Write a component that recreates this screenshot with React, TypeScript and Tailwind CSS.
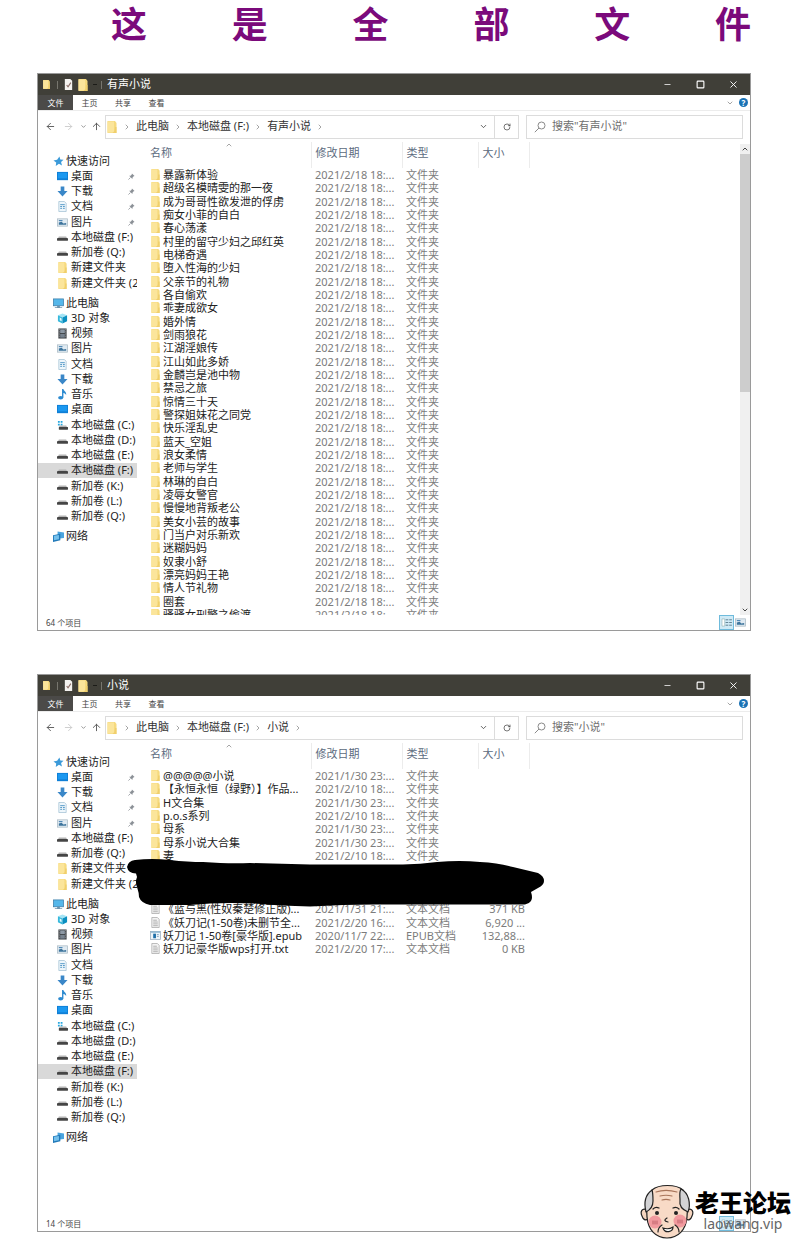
import type { ReactNode } from "react";
import { ArrowLeft, ArrowRight, ArrowUp, ChevronDown, ChevronRight, ChevronUp, Minus, RotateCw, Square, X } from "lucide-react";

type IconName = "star" | "desktop" | "download" | "doc" | "picture" | "drive" | "system" | "folder" | "pc" | "cube" | "video" | "music" | "network" | "text" | "epub";

type NavItem = { icon: IconName; label: string; pinned?: boolean; active?: boolean };

type FileRow = { icon: IconName; name: string; date: string; type: string; size?: string };

type ExplorerProps = {
  title: string;
  rows: (FileRow | null)[];
  status: string;
  scrollable?: boolean;
  children?: ReactNode;
};

const quickAccess: NavItem[] = [
  { icon: "desktop", label: "桌面", pinned: true },
  { icon: "download", label: "下载", pinned: true },
  { icon: "doc", label: "文档", pinned: true },
  { icon: "picture", label: "图片", pinned: true },
  { icon: "drive", label: "本地磁盘 (F:)" },
  { icon: "drive", label: "新加卷 (Q:)" },
  { icon: "folder", label: "新建文件夹" },
  { icon: "folder", label: "新建文件夹 (2)" },
];

const thisPc: NavItem[] = [
  { icon: "cube", label: "3D 对象" },
  { icon: "video", label: "视频" },
  { icon: "picture", label: "图片" },
  { icon: "doc", label: "文档" },
  { icon: "download", label: "下载" },
  { icon: "music", label: "音乐" },
  { icon: "desktop", label: "桌面" },
  { icon: "system", label: "本地磁盘 (C:)" },
  { icon: "drive", label: "本地磁盘 (D:)" },
  { icon: "drive", label: "本地磁盘 (E:)" },
  { icon: "drive", label: "本地磁盘 (F:)", active: true },
  { icon: "drive", label: "新加卷 (K:)" },
  { icon: "drive", label: "新加卷 (L:)" },
  { icon: "drive", label: "新加卷 (Q:)" },
];

const audioRows: FileRow[] = [
  "暴露新体验",
  "超级名模晴雯的那一夜",
  "成为哥哥性欲发泄的俘虏",
  "痴女小菲的自白",
  "春心荡漾",
  "村里的留守少妇之邱红英",
  "电梯奇遇",
  "堕入性海的少妇",
  "父亲节的礼物",
  "各自偷欢",
  "乖妻成欲女",
  "婚外情",
  "剑雨狼花",
  "江湖淫娘传",
  "江山如此多娇",
  "金麟岂是池中物",
  "禁忌之旅",
  "惊情三十天",
  "警探姐妹花之同党",
  "快乐淫乱史",
  "蓝天_空姐",
  "浪女柔情",
  "老师与学生",
  "林琳的自白",
  "凌辱女警官",
  "慢慢地背叛老公",
  "美女小芸的故事",
  "门当户对乐新欢",
  "迷糊妈妈",
  "奴隶小舒",
  "漂亮妈妈王艳",
  "情人节礼物",
  "圈套",
  "骚骚女刑警之偷渡",
].map((name) => ({ icon: "folder", name, date: "2021/2/18 18:...", type: "文件夹" }));

const novelRows: (FileRow | null)[] = [
  { icon: "folder", name: "@@@@@小说", date: "2021/1/30 23:...", type: "文件夹" },
  { icon: "folder", name: "【永恒永恒（绿野）】作品...", date: "2021/2/10 18:...", type: "文件夹" },
  { icon: "folder", name: "H文合集", date: "2021/1/30 23:...", type: "文件夹" },
  { icon: "folder", name: "p.o.s系列", date: "2021/2/10 18:...", type: "文件夹" },
  { icon: "folder", name: "母系", date: "2021/1/30 23:...", type: "文件夹" },
  { icon: "folder", name: "母系小说大合集", date: "2021/1/30 23:...", type: "文件夹" },
  { icon: "folder", name: "妻", date: "2021/2/10 18:...", type: "文件夹" },
  null,
  null,
  null,
  { icon: "text", name: "《蓝与黑(性奴秦楚修正版)...", date: "2021/1/31 21:...", type: "文本文档", size: "371 KB" },
  { icon: "text", name: "《妖刀记(1-50卷)未删节全...", date: "2021/2/20 16:...", type: "文本文档", size: "6,920 ..." },
  { icon: "epub", name: "妖刀记 1-50卷[豪华版].epub", date: "2020/11/7 22:...", type: "EPUB文档", size: "132,88..." },
  { icon: "text", name: "妖刀记豪华版wps打开.txt", date: "2021/2/20 17:...", type: "文本文档", size: "0 KB" },
];

const shapes: Record<IconName, ReactNode> = {
  star: <path d="M7 .5l1 3.200 3.500.3-2.700 2.500 1 3.800L6.500 8.500 3 11l.5-4L.5 5l4-.8z" fill="#3b9ad9" />,
  desktop: (
    <>
      <rect x="0" y="1" width="12" height="9" fill="#0f7fd6" />
      <rect x="1" y="2" width="10" height="6" fill="#1b98f0" />
    </>
  ),
  download: <path d="M4 .5h4v5h3.500L6 11.500.5 5.500H4z" fill="#3a87c8" />,
  doc: (
    <>
      <path d="M2 .5h6l2 2v9H2z" fill="#eef6fb" stroke="#9fbfd2" strokeWidth=".8" />
      <path d="M3.500 4h5M3.500 6h2M6.500 6h2M3.500 8h2M6.500 8h2" stroke="#4b93c4" />
    </>
  ),
  picture: (
    <>
      <rect x=".5" y="2" width="11" height="8" fill="#dfeaf2" stroke="#a9b9c4" strokeWidth=".8" />
      <path d="M2 3.500h4v1H2z" fill="#2d6fa5" />
      <path d="M2 8.500V6l3-.8L7 7l3-.5v2z" fill="#3d749c" />
    </>
  ),
  drive: (
    <>
      <path d="M2 5h8l1 2H1z" fill="#b4b4b4" />
      <rect x="0" y="6.500" width="12" height="3" rx=".5" fill="#454545" />
    </>
  ),
  system: (
    <>
      <path d="M1 1h2v2H1zM4 1h2v2H4zM1 4h2v2H1zM4 4h2v2H4z" fill="#26a7df" />
      <path d="M3 6h7l1 1.500H2z" fill="#b4b4b4" />
      <rect x="2" y="7.500" width="10" height="3" rx=".5" fill="#454545" />
    </>
  ),
  folder: (
    <>
      <path d="M1.500 0H9l1.500 2v10h-9z" fill="#f6da7e" />
      <path d="M1.500 .5H8v11H1.500z" fill="#fbe59b" />
      <path d="M9 6h1.500v6H6.500l2-2z" fill="#f0cf6c" />
    </>
  ),
  pc: (
    <>
      <rect x=".5" y="1" width="11" height="7.500" fill="#55b7ea" stroke="#3a7ca8" strokeWidth=".8" />
      <path d="M4.500 8.500h3v1.500H10v1H2v-1h2.500z" fill="#6d93ad" />
    </>
  ),
  cube: (
    <>
      <path d="M1 2.500L6 .5l5 2L6 5z" fill="#a5e4f5" />
      <path d="M1 2.500L6 5v6.500L1 9z" fill="#35b8dc" />
      <path d="M11 2.500L6 5v6.500L11 9z" fill="#0b8fc0" />
      <path d="M3 5l2 1v3L3 8z" fill="#e8f9fd" />
    </>
  ),
  video: (
    <>
      <rect x="1.500" y=".5" width="9" height="11" fill="#3f4449" />
      <rect x="3.500" y="1.500" width="5" height="4" fill="#8d99a5" />
      <rect x="3.500" y="6.500" width="5" height="4" fill="#76828e" />
      <path d="M2.500 1v10M9.500 1v10" stroke="#c8c8c8" strokeDasharray="1 1" strokeWidth=".7" />
    </>
  ),
  music: (
    <>
      <ellipse cx="4" cy="9.500" rx="2.800" ry="2" fill="#2c8ad0" />
      <path d="M5.500 0H7c.3 2.200 3.500 2.800 3 6.500C9.300 5 8 4.500 7 4.300V9.500H5.500z" fill="#2c8ad0" />
    </>
  ),
  network: (
    <>
      <path d="M5 .5l7 1v6l-7 1z" fill="#4aa4de" />
      <path d="M0 4.500l8-1.500v7l-8 2z" fill="#2179b8" />
      <path d="M1 5.300l5.500-1v4.700L1 10.200z" fill="#74c0ec" />
    </>
  ),
  text: (
    <>
      <path d="M2 .5h6l2 2v9H2z" fill="#f3f3f3" stroke="#a5a5a5" strokeWidth=".8" />
      <path d="M3.500 3.500h4M3.500 5.500h5M3.500 7.500h5M3.500 9.500h5" stroke="#9a9a9a" strokeWidth=".8" />
    </>
  ),
  epub: (
    <>
      <rect x=".5" y="1.500" width="11" height="9" fill="#eef5fa" stroke="#9ab" strokeWidth=".8" />
      <rect x="1" y="1.500" width="10" height="1.500" fill="#8bb4cf" />
      <rect x="3.500" y="4" width="3" height="5" fill="#1d6ea8" />
      <path d="M7.500 5h2M7.500 7h2" stroke="#68a" strokeWidth=".8" />
    </>
  ),
};

function Icon({ name, className = "size-[11px]" }: { name: IconName; className?: string }) {
  return (
    <svg viewBox="0 0 12 12" className={`shrink-0 ${className}`} aria-hidden="true">
      {shapes[name]}
    </svg>
  );
}

function Pin() {
  return (
    <svg viewBox="0 0 8 8" className="mr-[2px] ml-auto size-[7px] shrink-0" aria-hidden="true">
      <path d="M4.500.5l3 3-1 .3-1.300 1.400-.2 1.600L1.300 3.200 3 3l1.300-1.300z" fill="#8b9096" />
      <path d="M2.800 5.200L.5 7.500" stroke="#8b9096" strokeWidth=".9" />
    </svg>
  );
}

function NavHeading({ icon, label }: { icon: IconName; label: string }) {
  return (
    <a href="#" className="flex h-[15px] items-center gap-[2px] pl-[15px]">
      <Icon name={icon} />
      {label}
    </a>
  );
}

function NavList({ items }: { items: NavItem[] }) {
  return (
    <ul>
      {items.map((item) => (
        <li key={item.label} className="h-[15px] nth-[4n]:h-[16px]">
          <a
            href="#"
            className={`flex h-full items-center gap-[3px] overflow-hidden pl-[19px] whitespace-nowrap ${item.active ? "bg-[#d9d9d9]" : ""}`}
          >
            <Icon name={item.icon} />
            {item.label}
            {item.pinned && <Pin />}
          </a>
        </li>
      ))}
    </ul>
  );
}

function TitleBar({ title }: { title: string }) {
  return (
    <header className="flex h-[21px] items-center bg-[#403f38] pl-[4px] text-white">
      <Icon name="folder" className="size-[9px]" />
      <span className="ml-[6px] h-2 w-px bg-[#77766e]" />
      <svg viewBox="0 0 12 12" className="ml-[5px] size-[11px]" aria-hidden="true">
        <path d="M2 0h6l2 2v10H2z" fill="#f4f2ef" />
        <path d="M4 6.500l1.500 2L8.500 4" fill="none" stroke="#8a6d66" strokeWidth="1.200" />
      </svg>
      <Icon name="folder" className="ml-[3px] size-[12px]" />
      <span className="ml-[4px] h-px w-1 bg-[#1c1c18]" />
      <span className="ml-1 h-2 w-px bg-[#77766e]" />
      <h2 className="ml-[5px] flex-1 text-[11px]">{title}</h2>
      <button type="button" aria-label="最小化" className="flex w-[33px] justify-center">
        <Minus className="size-[9px]" />
      </button>
      <button type="button" aria-label="最大化" className="flex w-[33px] justify-center">
        <Square className="size-[9px]" strokeWidth={3} />
      </button>
      <button type="button" aria-label="关闭" className="flex w-[33px] justify-center">
        <X className="size-[11px]" />
      </button>
    </header>
  );
}

function RibbonTabs() {
  return (
    <div className="flex h-[16px] items-center border-b border-[#ececec] text-[8px] text-[#444]">
      <button type="button" className="h-full w-[35px] bg-[#4b4a48] text-white">
        文件
      </button>
      <button type="button" className="w-[33px]">主页</button>
      <button type="button" className="w-[34px]">共享</button>
      <button type="button" className="w-[33px]">查看</button>
      <ChevronDown className="ml-auto size-[8px] text-[#777]" />
      <button
        type="button"
        aria-label="帮助"
        className="mr-[2px] ml-[5px] flex size-[9px] items-center justify-center rounded-full bg-[#1a72b5] text-[8px] leading-none font-bold text-white"
      >
        ?
      </button>
    </div>
  );
}

function AddressBar({ title }: { title: string }) {
  return (
    <div className="flex h-[31px] items-center px-[7px] text-[#555]">
      <button type="button" aria-label="后退">
        <ArrowLeft className="size-[11px]" />
      </button>
      <button type="button" aria-label="前进" className="ml-[7px] text-[#ccc]">
        <ArrowRight className="size-[11px]" />
      </button>
      <button type="button" aria-label="最近" className="ml-[6px]">
        <ChevronDown className="size-[7px]" />
      </button>
      <button type="button" aria-label="向上" className="ml-1">
        <ArrowUp className="size-[11px]" />
      </button>
      <nav className="ml-[3px] flex h-[24px] flex-1 items-center border border-[#dcdcdc] text-[11px] whitespace-nowrap text-[#333]">
        <Icon name="folder" className="size-[12px]" />
        {["此电脑", "本地磁盘 (F:)", title].map((crumb) => (
          <span key={crumb} className="flex items-center">
            <ChevronRight className="mx-[5px] size-[8px] text-[#777]" />
            <a href="#">{crumb}</a>
          </span>
        ))}
        <ChevronRight className="mx-[5px] size-[8px] text-[#777]" />
        <button type="button" aria-label="展开" className="mr-[6px] ml-auto">
          <ChevronDown className="size-[9px]" />
        </button>
        <button type="button" aria-label="刷新" className="flex h-full w-[24px] items-center justify-center border-l border-[#dcdcdc]">
          <RotateCw className="size-[8px]" />
        </button>
      </nav>
      <label className="ml-[7px] flex h-[24px] w-[217px] items-center border border-[#dcdcdc] pl-[7px]">
        <svg viewBox="0 0 12 12" className="size-[12px] shrink-0" fill="none" stroke="#8a8a8a" aria-hidden="true">
          <circle cx="7.500" cy="4.500" r="3.500" />
          <path d="M5 7L.8 11.200" />
        </svg>
        <input
          type="search"
          aria-label="搜索"
          placeholder={`搜索"${title}"`}
          className="ml-[6px] w-full min-w-0 text-[11px] outline-none placeholder:text-[#6f6f6f]"
        />
      </label>
    </div>
  );
}

function FileTable({ rows }: { rows: (FileRow | null)[] }) {
  return (
    <table className="w-[390px] table-fixed border-collapse text-left whitespace-nowrap">
      <colgroup>
        <col className="w-[172px]" />
        <col className="w-[91px]" />
        <col className="w-[76px]" />
        <col className="w-[51px]" />
      </colgroup>
      <thead>
        <tr className="h-[26px] text-[#5c6b80]">
          <th className="relative border-r border-[#ececec] p-0 pb-[3px] pl-[11px] font-normal">
            名称
            <ChevronUp className="absolute -top-px left-1/2 size-[8px] text-[#777]" />
          </th>
          <th className="border-r border-[#ececec] p-0 pb-[3px] pl-1 font-normal">修改日期</th>
          <th className="border-r border-[#ececec] p-0 pb-[3px] pl-1 font-normal">类型</th>
          <th className="border-r border-[#ececec] p-0 pb-[3px] pl-1 font-normal">大小</th>
        </tr>
      </thead>
      <tbody className="leading-[13px] text-[#7c7c7c]">
        {rows.map((row, i) => (
          <tr key={i} className="h-[13px] nth-[3n]:h-[14px]">
            {row && (
              <>
                <td className="p-0 pl-[11px] text-[#222]">
                  <span className="flex items-center gap-[2px]">
                    <Icon name={row.icon} />
                    {row.name}
                  </span>
                </td>
                <td className="p-0 pl-1">{row.date}</td>
                <td className="p-0 pl-1">{row.type}</td>
                <td className="p-0 pr-1 text-right">{row.size}</td>
              </>
            )}
          </tr>
        ))}
      </tbody>
    </table>
  );
}

function ScrollBar() {
  return (
    <div className="mt-[2px] flex w-[10px] shrink-0 flex-col items-center bg-[#f0f0f0] text-[#444]">
      <ChevronUp className="my-px size-[8px]" strokeWidth={3} />
      <div className="h-[238px] w-full bg-[#cdcdcd]" />
      <ChevronDown className="mt-auto mb-px size-[8px]" strokeWidth={3} />
    </div>
  );
}

function StatusBar({ status }: { status: string }) {
  return (
    <footer className="flex h-[15px] items-center pl-2 text-[8px] text-[#444]">
      {status}
      <button type="button" aria-label="详细信息" className="ml-auto flex h-full w-[15px] items-center justify-center border border-[#6fbbdc] bg-[#cfeaf6]">
        <svg viewBox="0 0 12 10" className="h-[9px] w-[11px]" aria-hidden="true">
          <path d="M1 1h3v8H1z" fill="#fff" stroke="#8aa" strokeWidth=".6" />
          <path d="M5 2h3M9 2h3M5 5h3M9 5h3M5 8h3M9 8h3" stroke="#58788a" />
        </svg>
      </button>
      <button type="button" aria-label="大图标" className="mr-1 ml-px">
        <Icon name="picture" />
      </button>
    </footer>
  );
}

function Explorer({ title, rows, status, scrollable = false, children }: ExplorerProps) {
  return (
    <section className="relative border border-[#9a9a9a] bg-white text-[11px] text-[#222]">
      <TitleBar title={title} />
      <RibbonTabs />
      <AddressBar title={title} />
      <div className="flex h-[473px] overflow-hidden">
        <nav className="w-[99px] shrink-0 pt-[12px]">
          <NavHeading icon="star" label="快速访问" />
          <NavList items={quickAccess} />
          <div className="mt-[5px]">
            <NavHeading icon="pc" label="此电脑" />
            <NavList items={thisPc} />
          </div>
          <div className="mt-[5px]">
            <NavHeading icon="network" label="网络" />
          </div>
        </nav>
        <div className="ml-[2px] min-w-0 flex-1">
          <FileTable rows={rows} />
        </div>
        {scrollable && <ScrollBar />}
      </div>
      <StatusBar status={status} />
      {children}
    </section>
  );
}

function MarkerStroke() {
  return (
    <svg viewBox="127 860 418 48" className="absolute top-[184px] left-[89px] h-[48px] w-[418px]" aria-hidden="true">
      <path d="M135 861Q152 859 170 861T203 863Q230 865 250 864L310 865.500H403Q420 865 437 863Q460 861 480 863Q499 864 513 868L538 874Q544 877 544 882Q544 886 538 889L531 893Q533 899 531 902Q529 905 525 905.500H387Q350 905 310 907.500Q280 907 253 904.500Q220 903 190 906H150Q141 904 139 898Q139 894 137 888Q135 883 137 878L136 874.500Q128 874 127 868Q128 862 135 861Z" />
    </svg>
  );
}

function OldManFace() {
  return (
    <svg viewBox="0 0 54 56" className="h-[56px] w-[54px]" aria-hidden="true">
      <g stroke="#222" strokeWidth="1.200" strokeLinecap="round" strokeLinejoin="round">
        <path d="M7 26C2 23 0 28 2 32c1 3 3 5 6 3zM47 26c5-3 7 2 5 6-1 3-3 5-6 3z" fill="#f6d5bf" />
        <path d="M12 6C19 0 36 0 43 6c5 8 5 17 4 27-1 13-9 21-20 21S8 46 7 33c-1-9 0-19 5-27z" fill="#f8dac6" />
        <path d="M12 6c-7 5-8 14-6 22 4-2 7-5 7-11 0-4 0-8-1-11zM41 5c8 4 10 15 7 23-5-2-9-6-8-12 0-4-1-8 1-11z" fill="#d3d3d5" />
      </g>
      <g fill="none" stroke="#a8745a" strokeWidth="1.100" strokeLinecap="round">
        <path d="M16 8c6-2 14-2 21 0M20 12c4-1 8-1 12 0M22 16c3-1 5-1 8 0" />
      </g>
      <circle cx="15" cy="38" r="6.500" fill="#f19a9e" />
      <circle cx="40" cy="37" r="6.500" fill="#f19a9e" />
      <g fill="none" stroke="#222" strokeWidth="1.200" strokeLinecap="round">
        <path d="M13 25c2-2 4-2 6-1M33 24c2-1 4-1 6 1M27 34c-3 2-3 3 1 4M22 41c-3 2-4 4-4 7M35 41c3 2 4 4 4 7" />
        <path d="M13 37v3M15 37v3M17 37v3M38 36v3M40 36v3M42 36v3" stroke="#b2505a" strokeWidth=".8" />
        <path d="M23 44c3 1 7 1 10-1 0 5-8 7-10 1z" fill="#fff" />
      </g>
      <circle cx="17" cy="29" r="2" fill="#222" />
      <circle cx="36" cy="29" r="2" fill="#222" />
    </svg>
  );
}

export default function App() {
  return (
    <main className="relative bg-white pr-[49px] pb-6 pl-[37px] font-['Noto_Sans','Noto_Sans_CJK_SC',sans-serif]">
      <h1 className="flex h-[73px] justify-between pt-[7px] pl-[74px] text-[36px] leading-[36px] font-bold text-[#7b0a7b]">
        {[..."这是全部文件"].map((char) => (
          <span key={char}>{char}</span>
        ))}
      </h1>
      <div className="flex flex-col gap-[43px]">
        <Explorer title="有声小说" rows={audioRows} status="64 个项目" scrollable />
        <Explorer title="小说" rows={novelRows} status="14 个项目">
          <MarkerStroke />
        </Explorer>
      </div>
      {/* Forum watermark */}
      <div className="absolute right-[9px] bottom-4 flex items-center">
        <OldManFace />
        <div className="ml-px flex flex-col items-center">
          <strong className="text-[24px] leading-[24px] font-black text-black">老王论坛</strong>
          <span className="text-[14px] leading-[18px] text-[#666]">laowang.vip</span>
        </div>
      </div>
    </main>
  );
}
